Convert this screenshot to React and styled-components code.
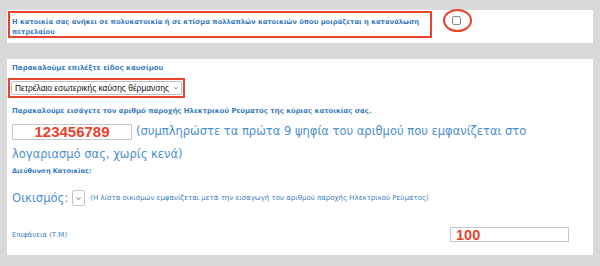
import styled, { createGlobalStyle } from 'styled-components';

const GlobalStyle = createGlobalStyle`
  html, body {
    margin: 0;
    padding: 0;
    background: #d9d9d9;
  }
  body {
    font-family: "DejaVu Sans", Verdana, sans-serif;
  }
`;

const Page = styled.div`
  padding: 10px 7px 0 7px;
  display: flex;
  flex-direction: column;
  gap: 16px;
`;

const Panel = styled.div`
  background: #fff;
  width: 586px;
  box-sizing: border-box;
  height: ${({ $h }) => $h}px;
  padding: ${({ $pad }) => $pad || '0'};
`;

const TopRow = styled.div`
  display: flex;
  align-items: flex-start;
  padding: 1px 0 0 1px;
`;

const Highlight = styled.div`
  border: 2px solid #e5432c;
  box-sizing: border-box;
  width: ${({ $w }) => $w}px;
  height: ${({ $h }) => $h}px;
  padding: ${({ $pad }) => $pad || '0'};
  margin: ${({ $m }) => $m || '0'};
`;

const SmallLabel = styled.div`
  font-size: ${({ $size }) => $size || 7}px;
  font-weight: ${({ $light }) => ($light ? 'normal' : 'bold')};
  color: #3b7cc0;
  line-height: ${({ $lh }) => $lh || '8px'};
  margin: ${({ $m }) => $m || '0'};
  white-space: ${({ $nowrap }) => ($nowrap ? 'nowrap' : 'normal')};
`;

const CircleMark = styled.div`
  margin: -2px 0 0 11px;
  width: 29px;
  height: 23px;
  border: 2.5px solid #e5432c;
  border-radius: 50%;
  box-sizing: border-box;
  display: flex;
  align-items: center;
  justify-content: center;
`;

const Check = styled.input.attrs({ type: 'checkbox' })`
  margin: 0 2px 1px 0;
  width: 9px;
  height: 9px;
  appearance: none;
  border: 1px solid #8a8a8a;
  border-radius: 2px;
  background: #fff;
`;

const Section = styled.div`
  padding: 0 0 0 5px;
`;

const FuelSelect = styled.div`
  height: 14px;
  box-sizing: border-box;
  background: #fff;
  border: 1px solid #bdbdbd;
  border-radius: 2px;
  display: flex;
  align-items: center;
  justify-content: space-between;
  padding: 0 2px 0 3px;
  font-family: "Liberation Sans", Arial, sans-serif;
  font-size: 8.4px;
  color: #111;
  white-space: nowrap;
  overflow: hidden;
`;

const Chevron = ({ size = 7 }) => (
  <svg width={size} height={size} viewBox="0 0 10 10" style={{ flexShrink: 0 }}>
    <path d="M2 3.5 L5 6.5 L8 3.5" fill="none" stroke="#555" strokeWidth="1.2" />
  </svg>
);

const MeterRow = styled.div`
  margin: 5px 0 0 0;
  font-size: 11.5px;
  color: #4a8fcf;
  line-height: 23px;
`;

const NumberBox = styled.span`
  display: inline-flex;
  align-items: center;
  justify-content: center;
  width: 120px;
  height: 16px;
  box-sizing: border-box;
  border: 1px solid #c8c8c8;
  font-family: "Liberation Sans", Arial, sans-serif;
  font-weight: bold;
  font-size: 15px;
  color: #e5432c;
  vertical-align: middle;
  margin-right: 4px;
`;

const SettlementRow = styled.div`
  display: flex;
  align-items: center;
  gap: 4px;
  height: 18px;
  margin-top: 14px;
`;

const BigLabel = styled.span`
  font-size: 11.6px;
  color: #4a8fcf;
`;

const TinySelect = styled.div`
  width: 13px;
  height: 16px;
  box-sizing: border-box;
  border: 1px solid #c4c4c4;
  border-radius: 2px;
  display: flex;
  align-items: center;
  justify-content: center;
  margin-right: 1px;
`;

const AreaRow = styled.div`
  display: flex;
  align-items: center;
  justify-content: space-between;
  padding-right: 24px;
  margin-top: 20px;
`;

const AreaInput = styled.div`
  width: 119px;
  height: 15px;
  box-sizing: border-box;
  border: 1px solid #c8c8c8;
  display: flex;
  align-items: center;
  padding-left: 5px;
  font-family: "Liberation Sans", Arial, sans-serif;
  font-weight: bold;
  font-size: 14.5px;
  color: #e5432c;
`;

export default function App() {
  return (
    <>
      <GlobalStyle />
      <Page>
        <Panel $h={33}>
          <TopRow>
            <Highlight $w={424} $h={27} $pad="5px 0 0 2px">
              <SmallLabel $size={6.75} $lh="9.5px">
                Η κατοικία σας ανήκει σε πολυκατοικία ή σε κτίσμα πολλαπλών κατοικιών όπου μοιράζεται η κατανάλωση πετρελαίου
              </SmallLabel>
            </Highlight>
            <CircleMark>
              <Check />
            </CircleMark>
          </TopRow>
        </Panel>

        <Panel $h={196} $pad="5px 0 0 0">
          <Section>
            <SmallLabel>Παρακαλούμε επιλέξτε είδος καυσίμου</SmallLabel>
          </Section>
          <Highlight $w={177} $h={20} $pad="1px 1px 0 1px" $m="6px 0 0 1px">
            <FuelSelect>
              Πετρέλαιο εσωτερικής καύσης θέρμανσης <Chevron size={6} />
            </FuelSelect>
          </Highlight>
          <Section>
            <SmallLabel $size={6.9} $m="9px 0 0 0" $nowrap>
              Παρακαλούμε εισάγετε τον αριθμό παροχής Ηλεκτρικού Ρεύματος της κύριας κατοικίας σας.
            </SmallLabel>
            <MeterRow>
              <NumberBox>123456789</NumberBox>
              (συμπληρώστε τα πρώτα 9 ψηφία του αριθμού που εμφανίζεται στο λογαριασμό σας, χωρίς κενά)
            </MeterRow>
            <SmallLabel $size={6.5} $lh="7px" $m="2px 0 0 0">Διεύθυνση Κατοικίας:</SmallLabel>
            <SettlementRow>
              <BigLabel>Οικισμός:</BigLabel>
              <TinySelect>
                <Chevron size={7} />
              </TinySelect>
              <SmallLabel $size={7} $light $nowrap>
                (Η λίστα οικισμών εμφανίζεται μετά την εισαγωγή του αριθμού παροχής Ηλεκτρικού Ρεύματος)
              </SmallLabel>
            </SettlementRow>
            <AreaRow>
              <SmallLabel $size={7} $light>Επιφάνεια (Τ.Μ)</SmallLabel>
              <AreaInput>100</AreaInput>
            </AreaRow>
          </Section>
        </Panel>
      </Page>
    </>
  );
}
